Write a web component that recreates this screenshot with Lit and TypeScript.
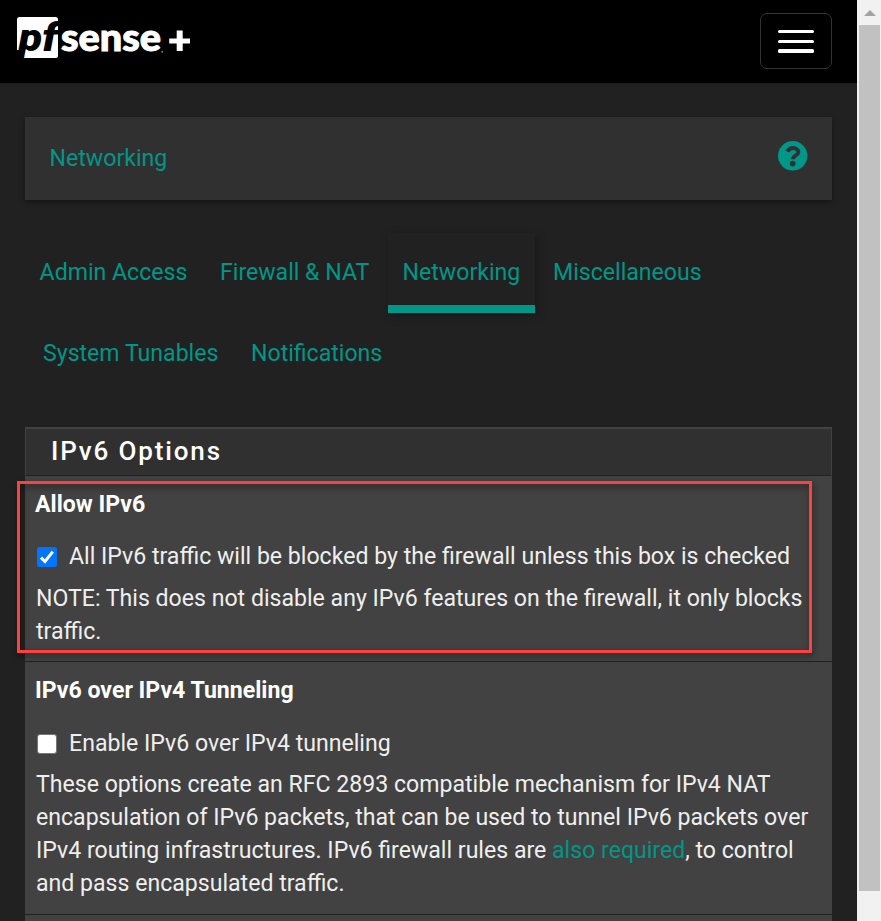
import { LitElement, html, css, svg } from "lit";
import { customElement } from "lit/decorators.js";
import { classMap } from "lit/directives/class-map.js";

const TABS = [
  ["Admin Access", "t1"],
  ["Firewall & NAT", "t2"],
  ["Networking", "t3 active"],
  ["Miscellaneous", "t4"],
  ["System Tunables", "t5"],
  ["Notifications", "t6"],
];

@customElement("app-root")
export class AppRoot extends LitElement {
  static styles = css`
    :host {
      display: flex;
      width: 881px;
      height: 921px;
      overflow: hidden;
      background: #212121;
      font-family: Roboto, "Liberation Sans", sans-serif;
      font-size: 23.1px;
      line-height: 33px;
      color: #efefef;
    }
    * { box-sizing: border-box; }
    .page { width: 857px; height: 921px; overflow: hidden; }
    .bar {
      height: 84px;
      padding: 13px 25px 0 13px;
      background: #000;
      border-bottom: 1px solid #1b1b1b;
      display: flex;
      justify-content: space-between;
    }
    .logo { display: block; margin-top: -3px; }
    .burger {
      width: 72px;
      height: 56px;
      border: 1px solid #333;
      border-radius: 7px;
      display: flex;
      flex-direction: column;
      align-items: center;
      padding-top: 16px;
    }
    .burger i { width: 36px; height: 3px; border-radius: 1.5px; background: #fff; margin-bottom: 7px; }
    .burger i:nth-child(2) { margin-bottom: 6px; }
    .burger i:nth-child(3) { height: 4px; }
    .crumb {
      margin: 33px 25px 0;
      height: 83px;
      padding: 0 24px 0 24.6px;
      background: #303030;
      box-shadow: 0 2px 6px rgba(0, 0, 0, 0.4);
      display: flex;
      align-items: center;
      justify-content: space-between;
      color: #009688;
    }
    .help { display: block; margin-top: -6px; }
    .tabs {
      margin: 33px 25px 0;
      display: grid;
      grid-template-rows: 81px 81px;
      color: #009688;
      white-space: nowrap;
    }
    .line { display: flex; }
    .tab { height: 80px; padding: 23px 0 0 14.6px; }
    .t1 { width: 180px; }
    .t2 { width: 183px; padding-left: 15px; }
    .t3 { width: 147px; }
    .t4 { width: 182px; padding-left: 18px; }
    .t5 { width: 208px; padding-left: 18px; }
    .t6 { padding-left: 18px; }
    .active {
      border-bottom: 8px solid #009688;
      box-shadow: 2px 3px 9px rgba(0, 0, 0, 0.3);
    }
    .panel { margin: 32px 25px 0; height: 520px; background: #424242; position: relative; }
    .head {
      height: 49px;
      border: 1px solid #424242;
      border-top-width: 2px;
      border-bottom-color: #212121;
      background: #303030;
      color: #fff;
      font-size: 26px;
      font-weight: 500;
      letter-spacing: 1.85px;
      padding: 6px 0 0 25px;
    }
    .row { border-bottom: 1px solid #212121; padding: 12px 0 0 10px; white-space: nowrap; }
    .r1 { height: 186px; }
    .r2 { height: 253px; }
    .title { color: #fff; font-weight: 700; }
    .check { display: flex; align-items: center; margin-top: 19px; padding-left: 2px; }
    .r2 .check { margin-top: 20px; }
    .box { display: block; margin-right: 12px; }
    .note { padding-left: 1px; margin-top: 9px; }
    .r2 .note { margin-top: 8px; }
    .link { color: #009688; }
    .mark {
      position: absolute;
      left: -8px;
      top: 54px;
      width: 795px;
      height: 172px;
      border: 3px solid #ff4040;
      filter: drop-shadow(1px 3px 3px rgba(0, 0, 0, 0.5));
    }
    .scroll { width: 24px; height: 921px; background: #f1f1f1; padding-left: 2px; }
    .arrow { height: 25px; display: flex; padding: 10px 0 0 5px; }
    .thumb { width: 21px; height: 866px; background: #c1c1c1; }
  `;

  private tab([label, cls]: string[]) {
    const names = Object.fromEntries(cls.split(" ").map((c) => [c, true]));
    return html`<div class=${classMap({ tab: true, ...names })}>${label}</div>`;
  }

  private box(on: boolean) {
    return html`<svg class="box" width="20" height="20" viewBox="0 0 20 20">
      ${on
        ? svg`<rect width="20" height="20" rx="2.5" fill="#0075ff"/><path d="M4 10.6 8 14.5 15.8 4.6" fill="none" stroke="#fff" stroke-width="3"/>`
        : svg`<rect x=".5" y=".5" width="19" height="19" rx="2.5" fill="#fff" stroke="#767676"/>`}
    </svg>`;
  }

  render() {
    return html`
      <div class="page">
        <div class="bar">
          <svg class="logo" width="184" height="60" viewBox="13 10 184 60">
            <rect x="17" y="17" width="41" height="41" rx="2.5" fill="#fff" />
            <path d="M17 50H22.500L20.800 58.500H17Z" fill="#000" />
            <text x="18.500" y="50.5" font-family="Roboto" font-weight="900" font-style="italic" font-size="38" textLength="39" lengthAdjust="spacingAndGlyphs" fill="#000">pf</text>
            <text x="61" y="50.6" font-family="Lato" font-weight="900" font-size="38.5" textLength="100" lengthAdjust="spacingAndGlyphs" fill="#fff" stroke="#fff" stroke-width="1">sense</text>
            <circle cx="162.2" cy="51.7" r="1" fill="#777" />
            <path d="M176.700 30.500h6v8h7.300v5h-7.300v7.500h-6v-7.500h-7.500v-5h7.500z" fill="#fff" />
          </svg>
          <div class="burger"><i></i><i></i><i></i></div>
        </div>
        <div class="crumb">
          <span>Networking</span>
          <svg class="help" width="30" height="30" viewBox="0 0 30 30">
            <circle cx="14.700" cy="14.800" r="14.700" fill="#009688" />
            <path d="M9.300 10.600C10.700 8.100 12.500 7 15 7C18 7 20.300 8.800 20.300 11.200C20.300 14.600 15 14.200 15 18.200" fill="none" stroke="#303030" stroke-width="4" />
            <circle cx="14.700" cy="22.600" r="2.800" fill="#303030" />
          </svg>
        </div>
        <div class="tabs">
          <div class="line">${TABS.slice(0, 4).map((t) => this.tab(t))}</div>
          <div class="line">${TABS.slice(4).map((t) => this.tab(t))}</div>
        </div>
        <div class="panel">
          <div class="head">IPv6 Options</div>
          <div class="row r1">
            <div class="title">Allow IPv6</div>
            <div class="check">${this.box(true)}<span>All IPv6 traffic will be blocked by the firewall unless this box is checked</span></div>
            <div class="note">NOTE: This does not disable any IPv6 features on the firewall, it only blocks<br />traffic.</div>
          </div>
          <div class="row r2">
            <div class="title">IPv6 over IPv4 Tunneling</div>
            <div class="check">${this.box(false)}<span>Enable IPv6 over IPv4 tunneling</span></div>
            <div class="note">These options create an RFC 2893 compatible mechanism for IPv4 NAT<br />encapsulation of IPv6 packets, that can be used to tunnel IPv6 packets over<br />IPv4 routing infrastructures. IPv6 firewall rules are <span class="link">also required</span>, to control<br />and pass encapsulated traffic.</div>
          </div>
          <div class="mark"></div>
        </div>
      </div>
      <div class="scroll">
        <div class="arrow"><svg width="12" height="6" viewBox="0 0 12 6"><path d="M0 6 6 0 12 6z" fill="#a3a3a3" /></svg></div>
        <div class="thumb"></div>
      </div>
    `;
  }
}
